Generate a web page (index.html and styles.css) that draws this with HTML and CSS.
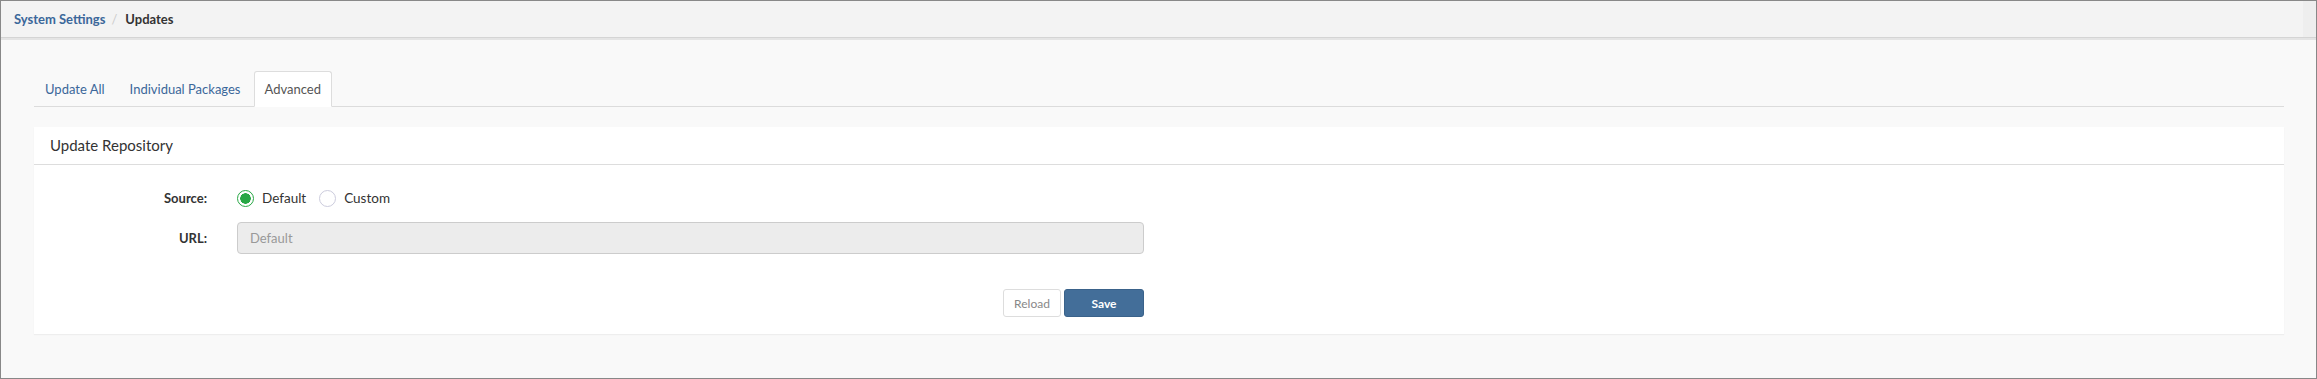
FILE: index.html
```html
<!DOCTYPE HTML>
<html>

<head>
    <title>Updates - Advanced</title>
    <meta name="viewport" content="width=device-width, initial-scale=1">
    <link rel="stylesheet" href="styles.css">
</head>

<body>
    <div class="frame">
        <div class="topbar">
            <a class="crumb" href="#">System Settings</a>
            <span class="sep">/</span>
            <span class="crumb-current">Updates</span>
        </div>

        <div class="content">
            <ul class="tabs">
                <li><a href="#">Update All</a></li>
                <li><a href="#">Individual Packages</a></li>
                <li class="active"><a href="#">Advanced</a></li>
            </ul>

            <div class="panel">
                <div class="panel-heading">Update Repository</div>
                <div class="panel-body">
                    <div class="form-row source-row">
                        <label class="form-label">Source:</label>
                        <div class="radios">
                            <label class="radio"><input type="radio" name="source" value="default" checked>
                                <span class="dot"></span>Default</label>
                            <label class="radio"><input type="radio" name="source" value="custom">
                                <span class="dot"></span>Custom</label>
                        </div>
                    </div>
                    <div class="form-row">
                        <label class="form-label" for="url">URL:</label>
                        <input type="text" id="url" class="text-input" placeholder="Default" disabled>
                    </div>
                    <div class="form-row buttons-row">
                        <span class="form-label"></span>
                        <div class="buttons">
                            <button class="btn btn-default">Reload</button>
                            <button class="btn btn-primary">Save</button>
                        </div>
                    </div>
                </div>
            </div>
        </div>
    </div>
</body>

</html>
```

FILE: styles.css
```css
html,
body {
    margin: 0px;
    padding: 0px;
}

body {
    font-family: Lato, "Open Sans", Arial, sans-serif;
    font-size: 13px;
    color: #333;
    background: #fff;
}

.frame {
    box-sizing: border-box;
    height: 379px;
    border: 1px solid #888;
    background-color: #f9f9f9;
    overflow: hidden;
}

.topbar {
    position: relative;
    height: 36px;
    padding-left: 13px;
    display: flex;
    align-items: center;
    background-color: #f3f3f3;
    border-bottom: 1px solid #d4d4d4;
    box-shadow: 0px 2px 0px #e4e4e4;
    font-weight: bold;
    font-size: 13px;
}

.topbar::after {
    content: "";
    position: absolute;
    right: 0px;
    top: 0px;
    bottom: 0px;
    width: 13px;
    background-color: #eeeeee;
}

.crumb {
    color: #3b679a;
    text-decoration: none;
}

.sep {
    color: #ccc;
    font-weight: normal;
    margin: 0px 8px 0px 6px;
}

.crumb-current {
    color: #333;
}

.content {
    padding: 33px 32px 0px 33px;
}

.tabs {
    list-style: none;
    margin: 0px;
    padding: 0px;
    display: flex;
    border-bottom: 1px solid #dcdcdc;
}

.tabs li {
    margin-right: 1px;
    margin-bottom: -1px;
}

.tabs a {
    display: block;
    height: 34px;
    line-height: 34px;
    padding: 0px 11px;
    color: #3b679a;
    text-decoration: none;
    border: 1px solid transparent;
    border-radius: 3px 3px 0px 0px;
}

.tabs li:first-child a {
    border-left: none;
}

.tabs li.active a {
    padding: 0px 10px;
    color: #555;
    background-color: #fff;
    border-color: #ddd #ddd transparent #ddd;
}

.panel {
    margin-top: 20px;
    background-color: #fff;
    box-shadow: 0px 1px 1px #eee;
}

.panel-heading {
    height: 37px;
    line-height: 37px;
    padding-left: 16px;
    font-size: 15px;
    color: #333;
    border-bottom: 1px solid #ddd;
}

.panel-body {
    padding: 23px 0px 17px 0px;
}

.form-row {
    display: grid;
    grid-template-columns: 173px 907px;
    column-gap: 30px;
    align-items: center;
    margin-bottom: 17px;
}

.source-row {
    margin-bottom: 14px;
}

.form-row:last-child {
    margin-bottom: 0px;
}

.buttons-row {
    margin-top: 35px;
}

.form-label {
    text-align: right;
    font-weight: bold;
}

.radios {
    display: flex;
    height: 20px;
    align-items: center;
    font-size: 13.5px;
}

.radio {
    display: inline-flex;
    align-items: center;
    margin-right: 13px;
    cursor: pointer;
}

.radio input {
    display: none;
}

.dot {
    box-sizing: border-box;
    width: 17px;
    height: 17px;
    border-radius: 50%;
    border: 1px solid #ccd;
    margin-right: 8px;
    background: #fff;
}

.radio input:checked + .dot {
    border: 1.5px solid #28a745;
    background: radial-gradient(circle, #28a745 0px, #28a745 5px, #fff 5.5px);
}

.text-input {
    box-sizing: border-box;
    width: 907px;
    height: 32px;
    padding: 0px 12px;
    font-family: inherit;
    font-size: 13px;
    color: #555;
    background-color: #ececec;
    border: 1px solid #ccc;
    border-radius: 4px;
}

.text-input::placeholder {
    color: #999;
}

.buttons {
    display: flex;
    justify-content: flex-end;
    gap: 3px;
}

.btn {
    box-sizing: border-box;
    height: 28px;
    padding: 0px 10px;
    font-family: inherit;
    font-size: 12px;
    border-radius: 3px;
    cursor: pointer;
}

.btn-default {
    width: 58px;
    color: #888;
    background-color: #fff;
    border: 1px solid #ddd;
}

.btn-primary {
    width: 80px;
    color: #fff;
    font-weight: bold;
    background-color: #436e99;
    border: 1px solid #3a628a;
}
```
